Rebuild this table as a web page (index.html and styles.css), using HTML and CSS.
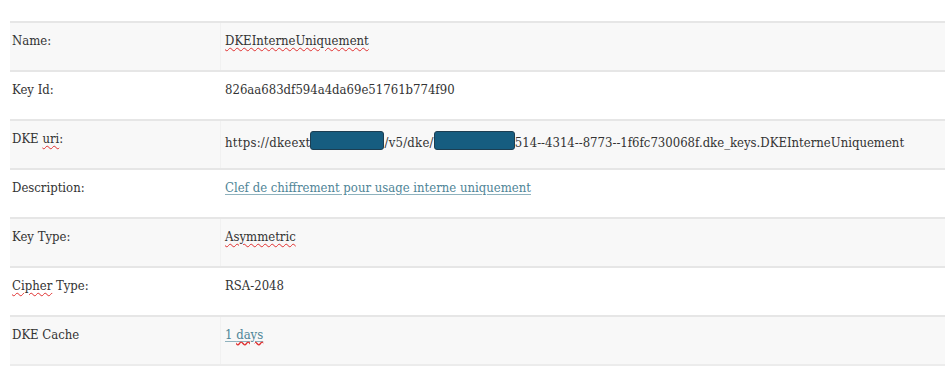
FILE: index.html
```html
<!DOCTYPE html>
<html lang="fr">
<head>
<meta charset="utf-8">
<title>DKE key</title>
<link rel="stylesheet" href="styles.css">
</head>
<body>
<div class="props">
  <div class="row alt">
    <div class="label">Name:</div>
    <div class="value"><span class="spell">DKEInterneUniquement</span></div>
  </div>
  <div class="row">
    <div class="label">Key Id:</div>
    <div class="value">826aa683df594a4da69e51761b774f90</div>
  </div>
  <div class="row alt">
    <div class="label">DKE <span class="spell">uri</span>:</div>
    <div class="value"><span class="seg">https://dkeext</span><span class="redact first"></span><span class="seg">/v5/dke/</span><span class="redact second"></span>514--4314--8773--1f6fc730068f.dke_keys.DKEInterneUniquement</div>
  </div>
  <div class="row">
    <div class="label">Description:</div>
    <div class="value"><a class="link" href="#">Clef de chiffrement pour usage interne uniquement</a></div>
  </div>
  <div class="row alt">
    <div class="label">Key Type:</div>
    <div class="value"><span class="spell">Asymmetric</span></div>
  </div>
  <div class="row">
    <div class="label"><span class="spell">Cipher</span> Type:</div>
    <div class="value">RSA-2048</div>
  </div>
  <div class="row alt last">
    <div class="label">DKE Cache</div>
    <div class="value"><a class="link" href="#">1 <span class="spell">days</span></a></div>
  </div>
</div>
</body>
</html>
```

FILE: styles.css
```css
html, body {
  margin: 0;
  padding: 0;
  background: #ffffff;
}

body {
  font-family: "DejaVu Serif Condensed", "DejaVu Serif", serif;
  font-stretch: condensed;
  font-size: 13px;
  color: #333333;
}

.props {
  margin: 21px 0 0 10px;
}

.row {
  display: grid;
  grid-template-columns: 210px 1fr;
  height: 49px;
  box-sizing: border-box;
  border-top: 2px solid #e6e6e6;
  background: #ffffff;
}

.row.alt {
  background: #f8f8f8;
}

.row.last {
  border-bottom: 2px solid #ececec;
  height: 51px;
}

.label, .value {
  padding-top: 10px;
  line-height: 16px;
  white-space: nowrap;
}

.label {
  padding-left: 2px;
}

.value {
  padding-left: 4px;
  border-left: 1px solid #f1f1f1;
}

.row:not(.alt) .value {
  border-left-color: transparent;
}

.seg {
  letter-spacing: 0.25px;
}

.spell {
  text-decoration: underline wavy #e03030;
  text-decoration-thickness: 1px;
  text-underline-offset: 2px;
}

.link {
  color: #4f8597;
  text-decoration: underline;
  text-decoration-color: #8fb2bd;
  text-underline-offset: 2px;
}

.link .spell {
  text-decoration: underline wavy #e03030;
}

.redact {
  display: inline-block;
  height: 17px;
  vertical-align: -3px;
  background: #165d80;
  border: 1px solid #1c3e52;
  border-radius: 3px;
}

.redact.first {
  width: 72px;
}

.redact.second {
  width: 79px;
}
```
